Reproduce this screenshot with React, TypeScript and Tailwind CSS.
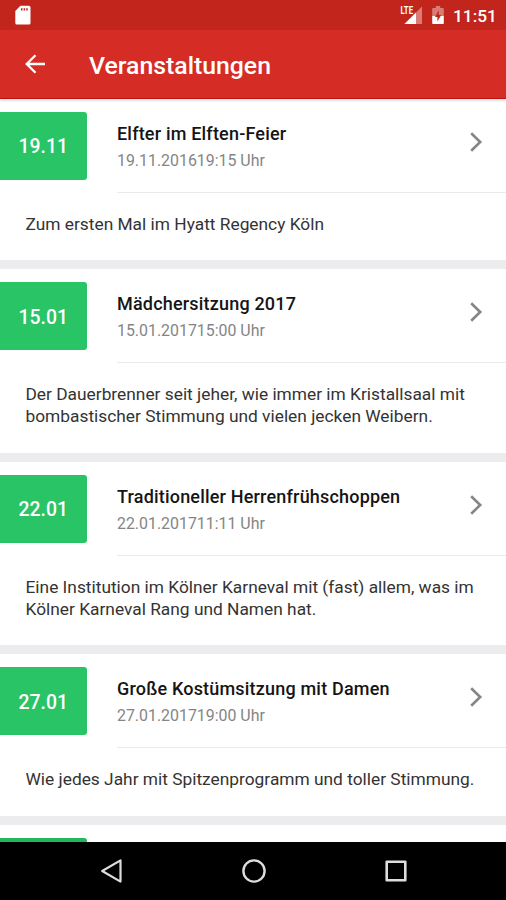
interface EventItem {
  day: string;
  title: string;
  time: string;
  lines: string[];
}

const events: EventItem[] = [
  { day: '19.11', title: 'Elfter im Elften-Feier', time: '19.11.201619:15 Uhr', lines: ['Zum ersten Mal im Hyatt Regency Köln'] },
  {
    day: '15.01',
    title: 'Mädchersitzung 2017',
    time: '15.01.201715:00 Uhr',
    lines: ['Der Dauerbrenner seit jeher, wie immer im Kristallsaal mit', 'bombastischer Stimmung und vielen jecken Weibern.'],
  },
  {
    day: '22.01',
    title: 'Traditioneller Herrenfrühschoppen',
    time: '22.01.201711:11 Uhr',
    lines: ['Eine Institution im Kölner Karneval mit (fast) allem, was im', 'Kölner Karneval Rang und Namen hat.'],
  },
  { day: '27.01', title: 'Große Kostümsitzung mit Damen', time: '27.01.201719:00 Uhr', lines: ['Wie jedes Jahr mit Spitzenprogramm und toller Stimmung.'] },
];

const StatusBar = () => (
  <div className="flex h-[30px] shrink-0 items-center bg-[#c1251c] pl-[15px] pr-[10px] text-white">
    <svg className="h-[20px] w-[16px]" viewBox="0 0 16 20" fill="currentColor">
      <path fillRule="evenodd" d="M5.5 0.7h8.4a1.6 1.6 0 0 1 1.6 1.6v15.6a1.6 1.6 0 0 1-1.6 1.6H1.9a1.6 1.6 0 0 1-1.6-1.6V6zM6 3.2v2.4h1.5V3.2zM8.6 3.2v2.4h1.5V3.2zM11.2 3.2v2.4h1.5V3.2z" />
    </svg>
    <div className="ml-auto flex items-center">
      <svg className="h-[20px] w-[23px]" viewBox="0 0 23 20">
        <path d="M22 1.5V19H4.5z" fill="#fff" fillOpacity="0.4" />
        <path d="M16 7.5V19H4.5z" fill="#fff" />
        <text x="0.5" y="9" fill="#fff" fontFamily="Roboto, sans-serif" fontSize="10.5" fontWeight="700" textLength="12.5" lengthAdjust="spacingAndGlyphs">LTE</text>
      </svg>
      <svg className="ml-[9px] h-[20px] w-[12px]" viewBox="0 0 12 20">
        <path d="M3.8 1h4.4v2H11a.8.8 0 0 1 .8.8V11H.2V3.8A.8.8 0 0 1 1 3h2.8z" fill="#fff" fillOpacity="0.4" />
        <path d="M.2 11h11.6v7.2a.8.8 0 0 1-.8.8H1a.8.8 0 0 1-.8-.8z" fill="#fff" />
        <path d="M6.8 5.2 3 12h2.4v4.6L9.2 10H6.8z" fill="#c1251c" />
      </svg>
      <span className="ml-[9px] w-[43px] whitespace-nowrap pt-[2px] text-[17.3px] font-medium leading-[20px]">11:51</span>
    </div>
  </div>
);

const AppBar = () => (
  <header className="relative z-10 flex h-[69px] shrink-0 items-center border-b border-[#bd120d] bg-[#d52d26] pl-[25px] text-white shadow-[0_2px_2px_#dde3e4]">
    <svg className="h-5 w-5" viewBox="0 0 20 20" fill="none" stroke="currentColor" strokeWidth="2.3">
      <path d="M20 10H2M10.5 1.2 1.7 10l8.8 8.8" />
    </svg>
    <h1 className="ml-[44px] pt-[4px] text-[24.8px] font-medium leading-[30px]">Veranstaltungen</h1>
  </header>
);

const EventCard = ({ event }: { event: EventItem }) => (
  <article className="border-b-[9px] border-[#ececef] bg-white">
    <div className="flex h-[94px] pt-[13px]">
      <div className="flex h-[68px] w-[87px] shrink-0 items-center justify-end rounded-r-[3px] bg-[#29c465] pr-[19px] pt-[2px] text-[19.4px] font-medium text-white">
        {event.day}
      </div>
      <div className="ml-[30px] flex flex-1 border-b border-[#ebebeb]">
        <div className="flex-1 pt-[10px]">
          <h2 className="whitespace-nowrap text-[18px] font-medium leading-[24px] tracking-[0.19px] text-[#151515]">{event.title}</h2>
          <p className="mt-[3px] whitespace-nowrap text-[15.9px] leading-[24px] text-[#858585]">{event.time}</p>
        </div>
        <svg className="mr-[23px] mt-[20px] h-[20px] w-[13px]" viewBox="0 0 13 20" fill="none" stroke="#858585" strokeWidth="2.6">
          <path d="M1.2 1.2 10.2 10l-9 8.8" />
        </svg>
      </div>
    </div>
    <div className="pb-[25.3px] pl-[25.5px] pt-[19.7px] text-[17.33px] leading-[22.3px] text-[#333]">
      {event.lines.map((line) => (
        <p key={line} className="whitespace-nowrap">{line}</p>
      ))}
    </div>
  </article>
);

const NavigationBar = () => (
  <nav className="flex h-[58px] shrink-0 items-center bg-black">
    <svg className="ml-[100px] h-6 w-[22px]" viewBox="0 0 22 24" fill="none" stroke="#ddd" strokeWidth="2.2" strokeLinejoin="round">
      <path d="M20.5 1.4v21.2L2.2 12z" />
    </svg>
    <svg className="ml-[120px] h-6 w-6" viewBox="0 0 24 24" fill="none" stroke="#ddd" strokeWidth="2.4">
      <circle cx="12" cy="12" r="10.6" />
    </svg>
    <svg className="ml-[119px] h-[22px] w-[22px]" viewBox="0 0 22 22" fill="none" stroke="#ddd" strokeWidth="2.6" strokeLinejoin="round">
      <path d="M1.7 1.7h18.6v18.6H1.7z" />
    </svg>
  </nav>
);

const App = () => (
  <div className="flex h-[900px] w-[506px] flex-col overflow-hidden bg-white font-[Roboto,sans-serif]">
    <StatusBar />
    <AppBar />
    <main className="flex-1 overflow-hidden">
      {events.map((event) => (
        <EventCard key={event.day} event={event} />
      ))}
      {/* next card, cut off by the navigation bar */}
      <div className="pt-[13px]">
        <div className="h-[68px] w-[87px] rounded-r-[3px] bg-[#20b85b]" />
      </div>
    </main>
    <NavigationBar />
  </div>
);

export default App;
